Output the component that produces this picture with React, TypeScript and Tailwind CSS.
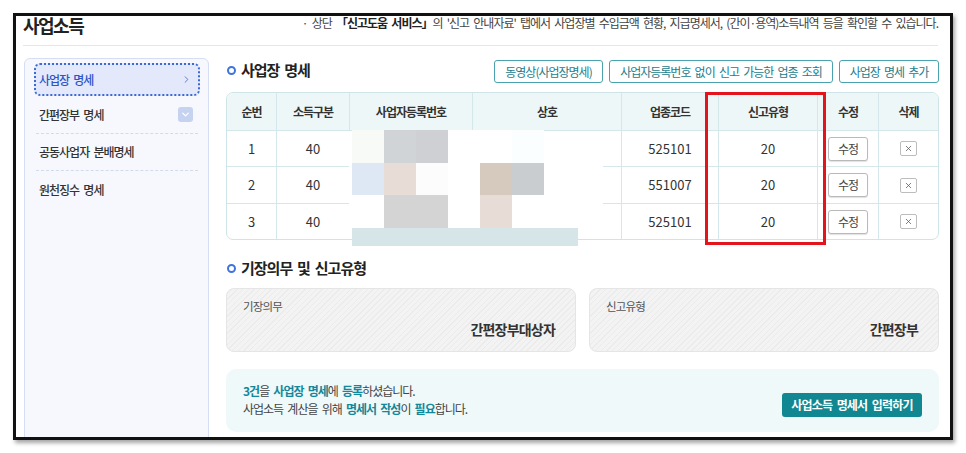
import { ChevronRight, ChevronDown, X } from 'lucide-react';

const columns = ['순번', '소득구분', '사업자등록번호', '상호', '업종코드', '신고유형', '수정', '삭제'];

const businesses = [
  { no: '1', kind: '40', code: '525101', type: '20' },
  { no: '2', kind: '40', code: '551007', type: '20' },
  { no: '3', kind: '40', code: '525101', type: '20' },
];

// redaction mosaic over the registration number / trade name cells
const mosaic = [
  ['bg-[#f8faf8]', 'bg-[#d0d4d6]', 'bg-[#cfd0d4]', 'bg-white', 'bg-white', 'bg-[#fbfeff]'],
  ['bg-[#dde8f4]', 'bg-[#e8dcd6]', 'bg-[#fcfcfc]', 'bg-white', 'bg-[#d6cabe]', 'bg-[#c9cdd0]'],
  ['bg-white', 'bg-[#d4d4d4]', 'bg-[#d4d4d4]', 'bg-white', 'bg-[#e8dcd6]', 'bg-white'],
];

const grid = 'grid grid-cols-[49px_73px_123px_149px_97px_99px_61px_60px]';
const outline = 'h-[23px] rounded-[3px] border border-[#4aa2ae] bg-white [word-spacing:2.5px]';

function Dot() {
  return <span className="w-[9px] h-[9px] rounded-full border-2 border-[#3f74df] bg-white ml-px" />;
}

export default function App() {
  return (
    <div className="w-[966px] h-[453px] bg-white pt-[13px] pl-[13px] font-['Noto_Sans_CJK_KR','Noto_Sans',sans-serif] text-[#333] [word-spacing:2.5px]">
      <div className="w-[940px] h-[427px] border-[3px] border-[#111] bg-white overflow-hidden shadow-[2px_3px_4px_rgba(0,0,0,0.35)]">
        {/* page header */}
        <div className="ml-[7px] mr-[12px] h-[30px] border-b border-[#e6e6e6] flex items-start justify-between">
          <h1 className="text-[18px] leading-[18px] font-bold tracking-[-1.5px] text-[#222]">사업소득</h1>
          <p className="text-[12px] leading-[14px] tracking-[-1px] text-[#444]">
            · 상단 <b className="text-[#222]">「신고도움 서비스」</b>의 '신고 안내자료' 탭에서 사업장별 수입금액 현황, 지급명세서, (간이·용역)소득내역 등을 확인할 수 있습니다.
          </p>
        </div>

        <div className="flex pl-[8px] pt-[12px]">
          {/* side menu */}
          <aside className="w-[185px] h-[400px] shrink-0 rounded-[6px] border border-[#d6def3] bg-[#f6f8fe] pt-[4px] pl-[9px] pr-[8px] text-[12px] tracking-[-1px]">
            <div className="h-[33px] rounded-[6px] border-2 border-dotted border-[#3b69d6] bg-[#e3e8fb] flex items-center justify-between pl-[3px] pr-[6px] text-[#2c55c6] font-medium">
              <span>사업장 명세</span>
              <ChevronRight size={11} strokeWidth={2} className="text-[#5b73b8]" />
            </div>
            <div className="mx-[2px] h-[38px] border-b border-dashed border-[#d3dae8] flex items-center justify-between pl-[3px] pr-[5px] font-medium">
              <span>간편장부 명세</span>
              <span className="w-[15px] h-[15px] rounded-[3px] bg-[#c5d2f0] flex items-center justify-center">
                <ChevronDown size={11} strokeWidth={3} className="text-white" />
              </span>
            </div>
            <div className="mx-[2px] h-[37px] border-b border-dashed border-[#d3dae8] flex items-center pl-[3px] font-medium">
              공동사업자 분배명세
            </div>
            <div className="mx-[2px] h-[37px] flex items-center pl-[3px] font-medium">원천징수 명세</div>
          </aside>

          <main className="ml-[17px] w-[713px] shrink-0">
            {/* 사업장 명세 */}
            <div className="h-[25px] flex items-end justify-between">
              <div className="self-center flex items-center gap-[5px]">
                <Dot />
                <h2 className="text-[15px] font-bold tracking-[-1px] text-[#222]">사업장 명세</h2>
              </div>
              <div className="flex gap-[6px] text-[12px] tracking-[-1px] text-[#1c7d8b]">
                <button className={`w-[109px] ${outline}`}>동영상(사업장명세)</button>
                <button className={`w-[224px] ${outline}`}>사업자등록번호 없이 신고 가능한 업종 조회</button>
                <button className={`w-[100px] ${outline}`}>사업장 명세 추가</button>
              </div>
            </div>

            <div className="relative mt-[9px]">
              <div className="rounded-[7px] border border-[#cfe4e8] overflow-hidden">
                <div className={`${grid} h-[37px] bg-[#eef7f7] text-[12px] font-semibold tracking-[-1px] text-[#333]`}>
                  {columns.map((c, i) => (
                    <div key={c} className={`flex items-center justify-center ${i > 0 ? 'border-l border-[#d4e8eb]' : ''}`}>{c}</div>
                  ))}
                </div>
                {businesses.map((b, r) => (
                  <div key={b.no} className={`${grid} ${r === 1 ? 'h-[37px]' : 'h-[36px]'} border-t border-[#d4e8eb] text-[13px] text-[#333]`}>
                    <div className="flex items-center justify-center">{b.no}</div>
                    <div className="flex items-center justify-center border-l border-[#d4e8eb]">{b.kind}</div>
                    <div className="border-l border-[#d4e8eb]" />
                    <div className="border-l border-[#d4e8eb]" />
                    <div className="flex items-center justify-center border-l border-[#d4e8eb]">{b.code}</div>
                    <div className="flex items-center justify-center border-l border-[#d4e8eb]">{b.type}</div>
                    <div className="flex items-center justify-center border-l border-[#d4e8eb]">
                      <button className="w-[40px] h-[24px] rounded-[3px] border border-[#b9b9b9] bg-white text-[12px] tracking-[-1px] text-[#444] shadow-[0_1px_1px_rgba(0,0,0,0.12)]">수정</button>
                    </div>
                    <div className="flex items-center justify-center border-l border-[#d4e8eb]">
                      <button className="w-[17px] h-[15px] rounded-[2px] border border-[#bdbdbd] bg-white flex items-center justify-center">
                        <X size={9} strokeWidth={2} className="text-[#555]" />
                      </button>
                    </div>
                  </div>
                ))}
              </div>

              {/* mosaic */}
              <div className="absolute left-[123px] top-[39px] w-[254px] h-[108px] bg-white" />
              <div className="absolute left-[126px] top-[38px]">
                {mosaic.map((row, r) => (
                  <div key={r} className="flex h-[32.5px]">
                    {row.map((cls, c) => (
                      <div key={c} className={`w-[32px] h-full ${cls}`} />
                    ))}
                  </div>
                ))}
                <div className="w-[226px] h-[18px] bg-[#d6e6e8]" />
              </div>

              {/* highlight around 신고유형 */}
              <div className="absolute left-[479px] top-0 w-[121px] h-[153px] border-[3px] border-[#e3141b]" />
            </div>

            {/* 기장의무 및 신고유형 */}
            <div className="mt-[18px] h-[20px] flex items-center gap-[5px]">
              <Dot />
              <h2 className="text-[15px] font-bold tracking-[-1px] text-[#222]">기장의무 및 신고유형</h2>
            </div>
            <div className="mt-[10px] grid grid-cols-2 gap-[13px]">
              {[
                ['기장의무', '간편장부대상자'],
                ['신고유형', '간편장부'],
              ].map(([label, value]) => (
                <div key={label} className="h-[64px] rounded-[8px] border border-[#e5e5e5] bg-[repeating-linear-gradient(135deg,#f3f3f3_0px,#f3f3f3_3px,#ebebeb_3px,#ebebeb_4px)] pt-[10px] pl-[16px] pr-[20px] flex flex-col">
                  <span className="text-[11.5px] leading-[14px] tracking-[-0.8px] text-[#555]">{label}</span>
                  <span className="mt-[7px] self-end text-[14px] leading-[18px] font-semibold tracking-[-0.8px] text-[#333]">{value}</span>
                </div>
              ))}
            </div>

            {/* notice */}
            <div className="mt-[17px] h-[63px] rounded-[10px] bg-[#eff9f9] pt-[13px] pl-[17px] pr-[17px] flex justify-between items-start">
              <div className="text-[12px] leading-[18px] tracking-[-1px] text-[#444]">
                <p>
                  <b className="text-[#13889a]">3건</b>을 <b className="text-[#13889a]">사업장 명세</b>에 <b className="text-[#13889a]">등록</b>하셨습니다.
                </p>
                <p>
                  사업소득 계산을 위해 <b className="text-[#13889a]">명세서 작성</b>이 <b className="text-[#13889a]">필요</b>합니다.
                </p>
              </div>
              <button className="mt-[11px] w-[140px] h-[24px] rounded-[3px] bg-[#118791] text-white text-[12px] font-bold tracking-[-0.8px] [word-spacing:2.5px]">
                사업소득 명세서 입력하기
              </button>
            </div>
          </main>
        </div>
      </div>
    </div>
  );
}
